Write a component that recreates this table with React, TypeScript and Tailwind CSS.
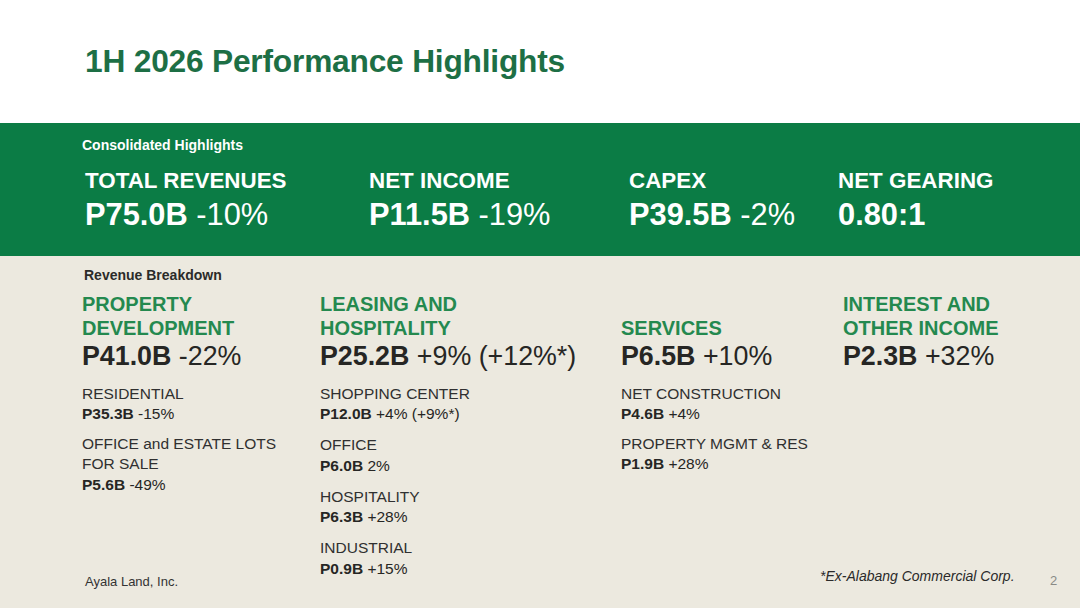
import React from 'react'

type Item = { label: string[]; value: string; change: string }

type Segment = {
  title: string[]
  value: string
  change: string
  items: Item[]
  width: string
  gap: string
}

const metrics = [
  { label: 'TOTAL REVENUES', value: 'P75.0B', change: '-10%', width: 'w-[284px]' },
  { label: 'NET INCOME', value: 'P11.5B', change: '-19%', width: 'w-[260px]' },
  { label: 'CAPEX', value: 'P39.5B', change: '-2%', width: 'w-[209px]' },
  { label: 'NET GEARING', value: '0.80:1', change: '', width: 'flex-1' },
]

const segments: Segment[] = [
  {
    title: ['PROPERTY', 'DEVELOPMENT'],
    value: 'P41.0B',
    change: '-22%',
    width: 'w-[238px]',
    gap: 'gap-[9px]',
    items: [
      { label: ['RESIDENTIAL'], value: 'P35.3B', change: '-15%' },
      { label: ['OFFICE and ESTATE LOTS', 'FOR SALE'], value: 'P5.6B', change: '-49%' },
    ],
  },
  {
    title: ['LEASING AND', 'HOSPITALITY'],
    value: 'P25.2B',
    change: '+9% (+12%*)',
    width: 'w-[301px]',
    gap: 'gap-[10.5px]',
    items: [
      { label: ['SHOPPING CENTER'], value: 'P12.0B', change: '+4% (+9%*)' },
      { label: ['OFFICE'], value: 'P6.0B', change: '2%' },
      { label: ['HOSPITALITY'], value: 'P6.3B', change: '+28%' },
      { label: ['INDUSTRIAL'], value: 'P0.9B', change: '+15%' },
    ],
  },
  {
    title: ['SERVICES'],
    value: 'P6.5B',
    change: '+10%',
    width: 'w-[222px]',
    gap: 'gap-[9px]',
    items: [
      { label: ['NET CONSTRUCTION'], value: 'P4.6B', change: '+4%' },
      { label: ['PROPERTY MGMT & RES'], value: 'P1.9B', change: '+28%' },
    ],
  },
  {
    title: ['INTEREST AND', 'OTHER INCOME'],
    value: 'P2.3B',
    change: '+32%',
    width: 'flex-1',
    gap: 'gap-[9px]',
    items: [],
  },
]

export default function App() {
  return (
    <div className="relative w-[1080px] h-[608px] overflow-hidden bg-[#ece9df] font-['Liberation_Sans',Arial,sans-serif] flex flex-col">
      {/* Title */}
      <header className="h-[123px] bg-white pl-[85px] pt-[46px]">
        <h1 className="text-[31.7px] leading-none font-bold text-[#1d6f45] tracking-[-0.2px]">
          1H 2026 Performance Highlights
        </h1>
      </header>

      {/* Consolidated */}
      <section className="h-[133px] bg-[#0b7c45] pl-[82px] pt-[15px] text-white">
        <div className="text-[14px] leading-none font-bold">Consolidated Highlights</div>
        <div className="flex mt-[18px] pl-[3px]">
          {metrics.map((m) => (
            <div key={m.label} className={m.width}>
              <div className="text-[22.4px] leading-none font-bold">{m.label}</div>
              <div className="mt-[8px] text-[30.8px] leading-none">
                <span className="font-bold">{m.value}</span>
                {m.change && <span> {m.change}</span>}
              </div>
            </div>
          ))}
        </div>
      </section>

      {/* Revenue breakdown */}
      <section className="flex-1 pl-[82px] pt-[12px] text-[#262624]">
        <div className="pl-[2px] text-[14px] leading-none font-bold text-[#2b2b29]">Revenue Breakdown</div>
        <div className="flex mt-[10px]">
          {segments.map((s) => (
            <div key={s.title.join(' ')} className={s.width}>
              <div className="h-[48px] flex flex-col justify-end text-[20px] leading-[24px] font-bold text-[#24894f]">
                {s.title.map((t) => (
                  <div key={t}>{t}</div>
                ))}
              </div>
              <div className="mt-[3px] text-[26.8px] leading-none">
                <span className="font-bold">{s.value}</span> {s.change}
              </div>
              <div className={`mt-[14px] flex flex-col ${s.gap} text-[15.5px] leading-[20.5px]`}>
                {s.items.map((it) => (
                  <div key={it.label.join(' ')}>
                    {it.label.map((l) => (
                      <div key={l} className="text-[#303030]">{l}</div>
                    ))}
                    <div>
                      <span className="font-bold">{it.value}</span> {it.change}
                    </div>
                  </div>
                ))}
              </div>
            </div>
          ))}
        </div>
      </section>

      {/* Footer */}
      <div className="absolute left-[85px] bottom-[20px] text-[13px] leading-none text-[#333]">Ayala Land, Inc.</div>
      <div className="absolute left-[820px] bottom-[25px] text-[14px] leading-none italic text-[#2a2a2a]">
        *Ex-Alabang Commercial Corp.
      </div>
      <div className="absolute left-[1050px] bottom-[21px] text-[13px] leading-none text-[#8a8a86]">2</div>
    </div>
  )
}
